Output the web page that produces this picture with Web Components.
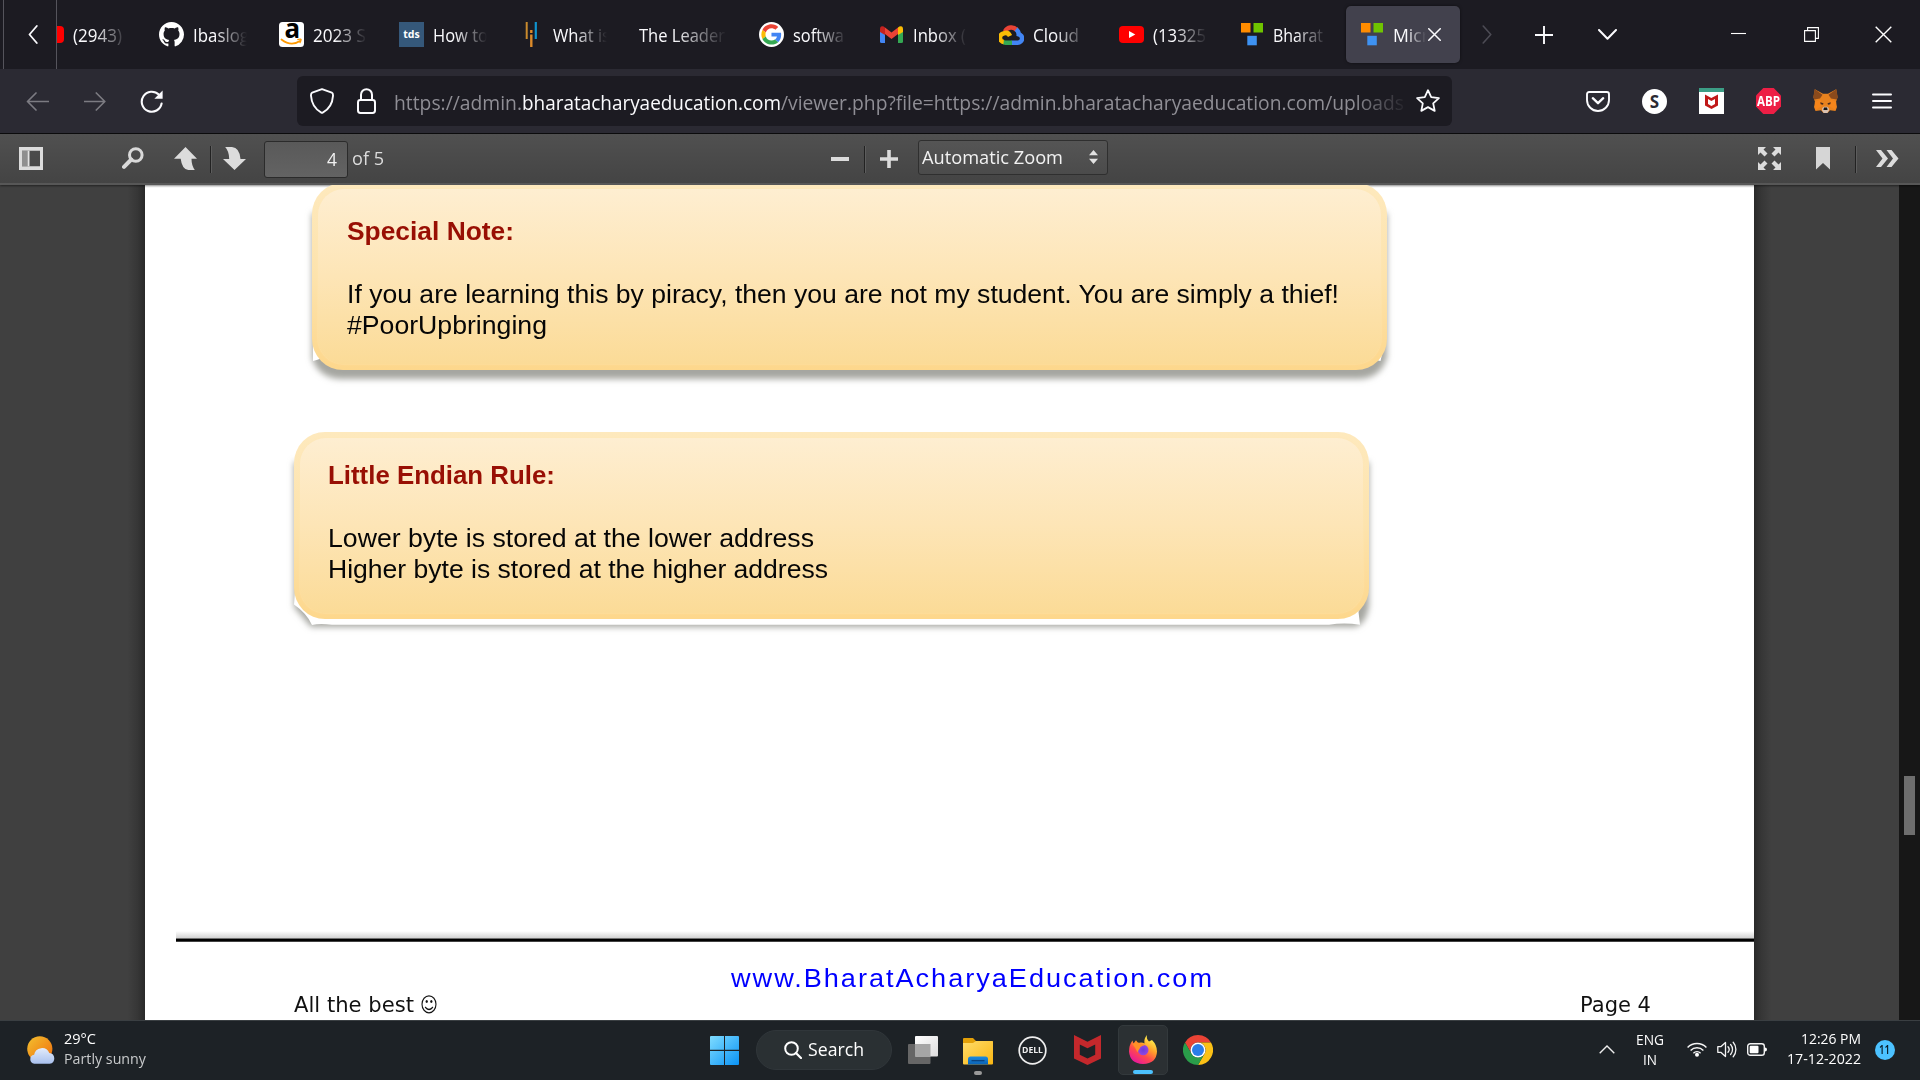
<!DOCTYPE html>
<html lang="en">
<head>
<meta charset="utf-8">
<title>Viewer</title>
<style>
html,body{margin:0;padding:0;background:#1c1b22}
body{width:1920px;height:1080px;overflow:hidden;font-family:"Open Sans","Noto Sans",sans-serif}
</style>
</head>
<body>
<desktop-screen></desktop-screen>
<script>
const ICONS = {
  chevL: ['0 0 10 19','<path d="M8.8 1 1.5 9.5l7.3 8.5" fill="none" stroke="#fbfbfe" stroke-width="1.8" stroke-linecap="round" stroke-linejoin="round"/>'],
  chevRdim: ['0 0 10 19','<path d="M1.2 1 8.8 9.5 1.2 18" fill="none" stroke="#4c4b54" stroke-width="1.6" stroke-linecap="round" stroke-linejoin="round"/>'],
  plus: ['0 0 18 18','<path d="M9 0v18M0 9h18" stroke="#fbfbfe" stroke-width="1.9" fill="none"/>'],
  chevD: ['0 0 19 11','<path d="M1 1l8.5 8.7L18 1" fill="none" stroke="#fbfbfe" stroke-width="2" stroke-linecap="round" stroke-linejoin="round"/>'],
  min: ['0 0 15 15','<path d="M0 6.5h15" stroke="#fff" stroke-width="1.1"/>'],
  restore: ['0 0 15 15','<path d="M.6 3.6h10.8v10.8H.6zM3.6 3.4V.6h10.8v10.8h-2.8" fill="none" stroke="#fff" stroke-width="1.1"/>'],
  close: ['0 0 17 17','<path d="M.7.7l15.6 15.6M16.3.7.7 16.3" stroke="#fff" stroke-width="1.4"/>'],
  closeTab: ['0 0 12 12','<path d="M.7.7l10.6 10.6M11.3.7.7 11.3" stroke="#fbfbfe" stroke-width="1.4" stroke-linecap="round"/>'],
  back: ['0 0 23 19','<path d="M22.5 9.5H1.5M10 1 1.5 9.5 10 18" fill="none" stroke="#7c7b82" stroke-width="1.7" stroke-linecap="round" stroke-linejoin="round"/>'],
  fwd: ['0 0 22 19','<path d="M.5 9.5h20M12.3 1l8.5 8.5-8.5 8.5" fill="none" stroke="#7c7b82" stroke-width="1.7" stroke-linecap="round" stroke-linejoin="round"/>'],
  reload: ['0 0 23 23','<path d="M18.8 4.6A10 10 0 1 0 21.6 13.5" fill="none" stroke="#fbfbfe" stroke-width="2.1" stroke-linecap="round"/><path d="M22.6.6v8.2h-8.2z" fill="#fbfbfe"/>'],
  shield: ['0 0 24 26','<path d="M12 1.2 21.8 4.7Q23.2 5.3 23 7.8 22.2 19.5 12.7 24.6 12 25 11.3 24.6 1.8 19.5 1 7.8.8 5.3 2.2 4.7z" fill="none" stroke="#fbfbfe" stroke-width="1.9" stroke-linejoin="round"/>'],
  lock: ['0 0 19 26','<rect x="1" y="12" width="17" height="13" rx="2.4" fill="none" stroke="#fbfbfe" stroke-width="2"/><path d="M4 12V6.7a5.5 5.5 0 0 1 11 0V12" fill="none" stroke="#fbfbfe" stroke-width="2"/>'],
  star: ['0 0 24 24','<path d="M12 1.2l3.2 7 7.7.9-5.7 5.2 1.5 7.6-6.7-3.8-6.7 3.8 1.5-7.6L1.1 9.1l7.7-.9z" fill="none" stroke="#fbfbfe" stroke-width="1.8" stroke-linejoin="round"/>'],
  pocket: ['0 0 24 21','<path d="M3.2 1h17.6Q23 1 23 3.2V9a11 11 0 0 1-22 0V3.2Q1 1 3.2 1z" fill="none" stroke="#fbfbfe" stroke-width="1.9"/><path d="M6.8 7.2 12 12.2l5.2-5" fill="none" stroke="#fbfbfe" stroke-width="2.3" stroke-linecap="round" stroke-linejoin="round"/>'],
  mcafeeExt: ['0 0 25 26','<path fill="#fff" d="M0 0h25v26H0z"/><path fill="#3c9e86" d="M0 0h25v4H0z"/><path d="M6 6.5l6.3 3.6L19 6.5v11L12.5 21 6 17.5zM9 11v5l3.4 2 3.6-2v-5l-3.6 2z" fill="#c01818" fill-rule="evenodd"/>'],
  octagon: ['0 0 25 26','<path d="M7.3 0h10.4L25 7.6v10.8L17.7 26H7.3L0 18.4V7.6z" fill="#ed1e45"/>'],
  fox: ['0 0 25 24','<path d="M1.8.2 10 4.800h5L23.200.2l1.300 8.300-1.500 4.500 1 5-1.500 4-5.500-.8L14.500 24h-4L8 21.200l-5.500.8-1.500-4 1-5L.5 8.500z" fill="#e8821e"/><path d="M1.800.2 9.500 5.800 7 9.500 1.200 10.500.3 7.500z" fill="#8a4a1c"/><path d="M23.200.2 15.500 5.800 18 9.500l5.800 1 .9-3z" fill="#8a4a1c"/><path d="M1.800 13l5.700-2.500L9 17l-6.500 4z" fill="#f6851b"/><path d="M23.200 13l-5.700-2.500L16 17l6.500 4z" fill="#f6851b"/><path d="M7.200 13.200l3.300 1-.5 1.600-2.300-.6zM17.800 13.200l-3.300 1 .5 1.600 2.300-.6z" fill="#4a2d1e"/><path d="M9.300 19l1.700-1.200h3l1.700 1.200.2 2.600L14.300 24h-3.600l-1.600-2.400z" fill="#d7c1b3"/><path d="M11 18.600h3l.6 2.400h-4.200z" fill="#161616"/>'],
  menu: ['0 0 20 16','<path d="M1 1.500h18M1 8h18M1 14.500h18" stroke="#fbfbfe" stroke-width="2" stroke-linecap="round"/>'],
  yt: ['0 0 25 17','<rect width="25" height="17" rx="4" fill="#f00"/><path d="M10 5v7l6.300-3.500z" fill="#fff"/>'],
  github: ['0 0 16 16','<path fill="#fff" d="M8 0C3.580 0 0 3.580 0 8c0 3.540 2.290 6.530 5.470 7.590.4.070.550-.170.550-.380 0-.190-.010-.820-.010-1.490-2.010.370-2.530-.490-2.690-.940-.090-.230-.480-.940-.820-1.130-.280-.150-.680-.520-.010-.530.630-.010 1.080.580 1.230.820.720 1.210 1.870.870 2.330.660.070-.520.280-.870.510-1.070-1.780-.200-3.640-.890-3.640-3.950 0-.870.310-1.590.820-2.150-.080-.200-.360-1.020.080-2.120 0 0 .670-.210 2.200.820.640-.180 1.320-.270 2-.270s1.360.090 2 .270c1.530-1.040 2.200-.820 2.200-.820.440 1.100.160 1.920.080 2.120.510.560.820 1.270.820 2.150 0 3.070-1.870 3.750-3.650 3.950.290.250.540.730.540 1.480 0 1.070-.010 1.930-.010 2.200 0 .210.150.460.550.380A8.010 8.010 0 0 0 16 8c0-4.420-3.580-8-8-8z"/>'],
  amazon: ['0 0 25 25','<rect width="25" height="25" rx="3.500" fill="#fff"/><path d="M2.500 17.500q9.500 7.500 18.500 1.500" fill="none" stroke="#f90" stroke-width="1.800" stroke-linecap="round"/><path d="M18.300 17.600q4.300-1 3.700.4-.2 1.800-1.300 3" fill="none" stroke="#f90" stroke-width="1.300"/>'],
  medium: ['0 0 25 25','<path d="M7.700 0v17" stroke="#c98a2d" stroke-width="2"/><path d="M16.800 0v17" stroke="#0f94cf" stroke-width="2.200"/><path d="M12.300 8v3M12.300 12.500V25" stroke="#dc8b2a" stroke-width="2.400"/>'],
  google: ['0 0 48 48','<circle cx="24" cy="24" r="24" fill="#fff"/><g transform="translate(4.500 4.500) scale(.81)"><path fill="#EA4335" d="M24 9.500c3.540 0 6.710 1.220 9.210 3.600l6.850-6.850C35.900 2.380 30.470 0 24 0 14.620 0 6.510 5.380 2.560 13.220l7.980 6.190C12.430 13.720 17.740 9.500 24 9.500z"/><path fill="#4285F4" d="M46.980 24.550c0-1.570-.15-3.090-.38-4.550H24v9.020h12.940c-.58 2.960-2.260 5.480-4.780 7.180l7.730 6c4.510-4.180 7.090-10.360 7.090-17.650z"/><path fill="#FBBC05" d="M10.530 28.590c-.48-1.450-.76-2.990-.76-4.590s.27-3.140.76-4.590l-7.980-6.190C.92 16.460 0 20.120 0 24s.92 7.540 2.560 10.780l7.970-6.190z"/><path fill="#34A853" d="M24 48c6.480 0 11.930-2.130 15.890-5.810l-7.730-6c-2.150 1.450-4.920 2.300-8.160 2.300-6.260 0-11.570-4.220-13.470-9.910l-7.980 6.190C6.510 42.620 14.620 48 24 48z"/></g>'],
  gmail: ['0 0 25 25','<path fill="#4285f4" d="M1 9v10.500Q1 21 2.500 21H6V11z"/><path fill="#34a853" d="M24 9v10.500q0 1.500-1.500 1.500H19V11z"/><path fill="#ea4335" d="M6 5.500l6.500 5 6.500-5V12l-6.500 5L6 12z"/><path fill="#fbbc04" d="M19 5.500q2-2 4-1Q24 5 24 7v3l-5 3z"/><path fill="#c5221f" d="M6 5.500q-2-2-4-1Q1 5 1 7v3l5 3z"/>'],
  cloud: ['0 0 25 21','<g fill="none" stroke-width="4.500"><path d="M6 7.500A7 7 0 0 1 17.800 6" stroke="#ea4335"/><path d="M17 5.200q2.700 2 2.700 5a4.300 4.300 0 0 1-1 8.500H12.500" stroke="#4285f4"/><path d="M13 18.700H6.500q-1.500 0-2.600-1" stroke="#34a853"/><path d="M4.700 18A4.300 4.300 0 0 1 4.500 9.500Q9 7.600 11 12" stroke="#fbbc05"/></g>'],
  bharat: ['0 0 25 25','<path fill="#ff8c00" d="M2 1h9.500v9.500H2z"/><path fill="#6fc400" d="M14.500 1H24v9.500h-9.500z"/><path fill="#3e92f2" d="M8.300 13.800h9.500v9.500H8.300z"/>'],
  sidebar: ['0 0 24 24','<path d="M0 0h24v24H0zM3 4v16h18V4z" fill="#dcdcdc" fill-rule="evenodd"/><path d="M3 4h5.500v16H3z" fill="#8f8f8f"/><path d="M8.500 4H10.500v16H8.500z" fill="#e3e3e3"/>'],
  find: ['0 0 22 22','<circle cx="13.800" cy="8" r="6.300" fill="none" stroke="#d9d9d9" stroke-width="3"/><path d="M9.300 12.500 2 19.800" stroke="#d9d9d9" stroke-width="4" stroke-linecap="round"/>'],
  up: ['0 0 23 23','<path d="M11.500 0 23 11.800h-5.500q0 6.700 3.300 11.200h-6.500Q8 22.500 6.700 11.800H0z" fill="#dcdcdc"/>'],
  down: ['0 0 23 23','<path d="M11.500 23 23 12h-5.500Q16.500.5 9 0H2.200q4 4.500 4 12H0z" fill="#dcdcdc"/>'],
  minusP: ['0 0 18 18','<path d="M0 7h18v4H0z" fill="#dcdcdc"/>'],
  plusP: ['0 0 18 18','<path d="M0 7.200h7.200V0h3.600v7.200H18v3.600h-7.200V18H7.200v-7.200H0z" fill="#dcdcdc"/>'],
  updown: ['0 0 9 14','<path d="M4.500 0 9 5.200H0zM4.500 14 0 8.800h9z" fill="#e2e2e2"/>'],
  full: ['0 0 23 23','<g fill="#dcdcdc"><path id="a" d="M0 0h8L5.500 2.500l4 4-3 3-4-4L0 8z"/><use href="#a" transform="matrix(-1 0 0 1 23 0)"/><use href="#a" transform="matrix(1 0 0 -1 0 23)"/><use href="#a" transform="matrix(-1 0 0 -1 23 23)"/></g>'],
  bookmark: ['0 0 16 23','<path d="M1 0h14v22.500L8 16 1 22.500z" fill="#d6d6d6"/>'],
  dbl: ['0 0 23 17','<path d="M0 0h5l7 8.500L5 17H0l6.500-8.500zM10.500 0h5l7 8.500-7 8.500h-5L17 8.500z" fill="#dcdcdc"/>'],
  weather: ['0 0 28 28','<defs><linearGradient id="s" x1="0" y1="0" x2="1" y2="1"><stop offset="0" stop-color="#f3c12f"/><stop offset="1" stop-color="#ef6c0c"/></linearGradient><linearGradient id="c" x1="0" y1="0" x2="0" y2="1"><stop offset="0" stop-color="#e2ebfa"/><stop offset="1" stop-color="#a9c1ee"/></linearGradient></defs><circle cx="12.800" cy="12.800" r="12.600" fill="url(#s)"/><path d="M7.300 27.800a4.600 4.600 0 0 1-.2-9.100 8 8 0 0 1 15.200-1.800 5.500 5.500 0 0 1 .4 10.900z" fill="url(#c)"/>'],
  win: ['0 0 29 29','<defs><linearGradient id="w" x1="0" y1="0" x2="1" y2="1" gradientUnits="objectBoundingBox"><stop offset="0" stop-color="#7fdcff"/><stop offset="1" stop-color="#0a93f5"/></linearGradient></defs><path d="M1 0h13v13.800H0V1q0-1 1-1zM15 0h13q1 0 1 1v12.800H15zM0 15h14v14H1q-1 0-1-1zM15 15h14v13q0 1-1 1H15z" fill="url(#w)"/>'],
  search: ['0 0 18 18','<circle cx="7.500" cy="7.500" r="6.300" fill="none" stroke="#fff" stroke-width="2"/><path d="M12 12l5 5" stroke="#fff" stroke-width="2.200" stroke-linecap="round"/>'],
  taskview: ['0 0 30 28','<defs><linearGradient id="t" x1="0" y1="0" x2="1" y2="1"><stop offset="0" stop-color="#fff"/><stop offset="1" stop-color="#dcdcdc"/></linearGradient></defs><rect y="8" width="22.500" height="20" rx="1" fill="#666"/><rect x="7" width="23" height="20.500" rx="1" fill="url(#t)"/><path d="M7 8h15.500v12.500H7z" fill="#a6a6a6"/>'],
  folder: ['0 0 30 28','<defs><linearGradient id="f" x1="0" y1="0" x2="1" y2="1"><stop offset="0" stop-color="#ffdc6a"/><stop offset="1" stop-color="#f9b612"/></linearGradient><linearGradient id="b" x1="0" y1="0" x2="0" y2="1"><stop offset="0" stop-color="#1a8be0"/><stop offset="1" stop-color="#0b62b5"/></linearGradient></defs><path d="M0 2q0-1 1-1h9l3 3h16q1 0 1 1v8H0z" fill="#e3a008"/><path d="M0 6h10l3-2h16q1 0 1 1v21.500q0 1-1 1H1q-1 0-1-1z" fill="url(#f)"/><path d="M5 27.500V22q0-2.500 2.500-2.500h15Q25 19.500 25 22v5.500z" fill="url(#b)"/><path d="M8.500 23.700h13" stroke="#0a3f7a" stroke-width="1.200"/>'],
  ring: ['0 0 29 29','<circle cx="14.500" cy="14.500" r="13.300" fill="none" stroke="#eee" stroke-width="1.700"/>'],
  mcafee: ['0 0 27 30','<path d="M0 0l13.500 6.700L27 0v23.500L13.500 30 0 23.500zM5.800 9.500v10.300l7.700 3.700 7.700-3.700V9.500l-7.700 3.800z" fill="#c4282c" fill-rule="evenodd"/>'],
  firefox: ['0 0 28 29','<defs><linearGradient id="o" x1=".8" y1=".1" x2=".25" y2=".95"><stop offset="0" stop-color="#fff44f"/><stop offset=".35" stop-color="#ffa22a"/><stop offset=".65" stop-color="#ff4a4a"/><stop offset="1" stop-color="#e91a9a"/></linearGradient><radialGradient id="p"><stop offset="0" stop-color="#6b3bdc"/><stop offset="1" stop-color="#9347e0"/></radialGradient></defs><path d="M18 0q-1 3.500 2 6.500l3-1.500q5 5 5 11.500Q27.500 28.500 14 29 1 28.500 0 16.500 0 10 3.500 5.500l1 3L7 5.300 9 8q4-1 6.500.5Q14.500 4 18 0z" fill="url(#o)"/><circle cx="14.200" cy="15" r="5.300" fill="url(#p)"/><path d="M3.500 9q5-2.500 7.500-.7 3.500.2 4.500 2.200-4 .5-4.500 2.500-2 2.500-2.500 4.500Q6 12 3.500 9z" fill="#ff9026"/>'],
  chrome: ['0 0 48 48','<path fill="#ea4335" d="M24 0a24 24 0 0 1 20.800 12H24a12 12 0 0 0-10.400 18L3.200 12A24 24 0 0 1 24 0z"/><path fill="#fbc116" d="M44.800 12A24 24 0 0 1 24 48l10.400-18A12 12 0 0 0 24 12z"/><path fill="#2a9d4a" d="M3.200 12l10.400 18a12 12 0 0 0 20.800 0L24 48A24 24 0 0 1 3.200 12z"/><circle cx="24" cy="24" r="12" fill="#fff"/><circle cx="24" cy="24" r="9.600" fill="#2a7de9"/>'],
  chevU: ['0 0 16 9','<path d="M.7 8.300 8 1l7.300 7.300" fill="none" stroke="#eee" stroke-width="1.400"/>'],
  wifi: ['0 0 20 15','<g fill="none" stroke="#f4f4f4" stroke-width="1.500"><path d="M.6 5.500a13.300 13.300 0 0 1 18.800 0M3.600 8.500a9 9 0 0 1 12.800 0M6.400 11.200a5.200 5.200 0 0 1 7.200 0"/></g><circle cx="10" cy="12.800" r="2" fill="#fff"/>'],
  vol: ['0 0 20 17','<g fill="none" stroke="#f4f4f4" stroke-width="1.300" stroke-linejoin="round" stroke-linecap="round"><path d="M.8 5.700h3L8.500 1.500v14L3.800 11.300h-3z"/><path d="M11 5.800a4 4 0 0 1 0 5.400M13.600 3.500a7.500 7.500 0 0 1 0 10M16.200 1.300a11 11 0 0 1 0 14.400"/></g>'],
  batt: ['0 0 20 13','<rect x=".7" y=".7" width="16.600" height="11.600" rx="2.600" fill="none" stroke="#f4f4f4" stroke-width="1.400"/><rect x="2.700" y="2.700" width="8.800" height="7.600" rx="1" fill="#fff"/><path d="M18 4.500q2 0 2 2t-2 2z" fill="#fff"/>'],
};

class UiIcon extends HTMLElement {
  connectedCallback() {
    const [vb, body] = ICONS[this.getAttribute('name')];
    const w = this.getAttribute('w'), h = this.getAttribute('h');
    this.attachShadow({mode:'open'}).innerHTML =
      `<style>:host{display:block;flex:none;width:${w}px;height:${h}px}svg{display:block;width:100%;height:100%}</style>
       <svg viewBox="${vb}" preserveAspectRatio="none">${body}</svg>`;
  }
}

/* One line of text, condensed or widened horizontally to a set measure. */
class TextRun extends HTMLElement {
  connectedCallback() {
    const g = n => this.getAttribute(n);
    this.attachShadow({mode:'open'}).innerHTML =
      `<style>:host{display:block;flex:none;width:${g('w')}px;font-size:${g('s')}px;line-height:${g('lh') || 24}px;white-space:pre}
       span{display:inline-block;transform-origin:0 50%}</style><span><slot></slot></span>`;
    this.fit();
    requestAnimationFrame(() => this.fit());
  }
  fit() {
    const s = this.shadowRoot.querySelector('span');
    s.style.transform = 'none';
    const n = s.getBoundingClientRect().width;
    if (n) s.style.transform = `scaleX(${+this.getAttribute('w') / n})`;
  }
}

class BrowserTab extends HTMLElement {
  connectedCallback() {
    const active = this.hasAttribute('active'), iconless = this.hasAttribute('iconless');
    this.attachShadow({mode:'open'}).innerHTML = `<style>
      :host{display:flex;flex:none;width:120px;height:69px;box-sizing:border-box;padding:6px 3px}
      .box{display:flex;align-items:center;width:114px;box-sizing:border-box;padding-left:13px;gap:9px;border-radius:5px;${active ? 'background:#42414d;box-shadow:0 0 3px #0008' : ''}}
      .pic{display:flex;width:25px;height:25px;flex:none;align-items:center;justify-content:center}
      .label{width:${iconless ? 88 : active ? 33 : 54}px;overflow:hidden;flex:none;color:#fbfbfe;
        -webkit-mask-image:linear-gradient(90deg,#000 40%,transparent 100%);mask-image:linear-gradient(90deg,#000 40%,transparent 100%)}
      ui-icon{margin-left:-7px}
    </style><div class="box">${iconless ? '' : '<div class="pic"><slot name="icon"></slot></div>'}
      <div class="label"><slot></slot></div>${active ? '<ui-icon name="closeTab" w="13" h="13"></ui-icon>' : ''}</div>`;
  }
}

class TabStrip extends HTMLElement {
  connectedCallback() {
    const t = (icon, label, w, extra='') => `<browser-tab ${extra}>${icon ? `<span slot="icon">${icon}</span>` : ''}<text-run w="${w}" s="18">${label}</text-run></browser-tab>`;
    const i = (n, w=25, h=25) => `<ui-icon name="${n}" w="${w}" h="${h}"></ui-icon>`;
    this.attachShadow({mode:'open'}).innerHTML = `<style>
      :host{display:flex;align-items:center;height:69px;background:#1c1b22;flex:none}
      .scroll{display:flex;align-items:center;justify-content:center;box-sizing:border-box;width:54px;height:69px;margin-left:3px;padding-left:5px;border-left:1px solid #55545c;border-right:1px solid #55545c;flex:none}
      .tabs{display:flex;width:1406px;overflow:hidden;flex:none}
      .tabs browser-tab:first-child{margin-left:-34px}
      .a{position:relative;width:25px;height:25px;display:block}
      .a b{position:absolute;left:5.500px;top:-9px;font:bold 26px/30px "Noto Sans";color:#000}
      .tds{display:block;width:25px;height:25px;background:#35587a;color:#fff;font:bold 10.500px/24px "Noto Sans";text-align:center}
    </style>
    <div class="scroll">${i('chevL',10,19)}</div>
    <div class="tabs">
      ${t(i('yt',25,17),'(2943)',49)}
      ${t(i('github'),'Ibaslog',56)}
      ${t(`<span class="a">${i('amazon')}<b>a</b></span>`,'2023 S',53)}
      ${t('<span class="tds">tds</span>','How to',55)}
      ${t(i('medium',25,25),'What is',57)}
      ${t('','The Leader',86,'iconless')}
      ${t(i('google'),'softwa',51)}
      ${t(i('gmail',25,25),'Inbox (',53)}
      ${t(i('cloud',25,21),'Cloud',46)}
      ${t(i('yt',25,17),'(13325',53)}
      ${t(i('bharat'),'Bharat',50)}
      ${t(i('bharat'),'Micr',36,'active')}
    </div>
    <ui-icon name="chevRdim" w="10" h="19" style="margin-left:19px"></ui-icon>
    <ui-icon name="plus" w="18" h="18" style="margin:1px 0 0 43px"></ui-icon>
    <ui-icon name="chevD" w="19" h="11" style="margin-left:45px"></ui-icon>
    <ui-icon name="min" w="15" h="15" style="margin-left:114px"></ui-icon>
    <ui-icon name="restore" w="15" h="15" style="margin-left:58px"></ui-icon>
    <ui-icon name="close" w="17" h="17" style="margin-left:56px"></ui-icon>`;
  }
}

class NavBar extends HTMLElement {
  connectedCallback() {
    const i = (n, w, h, ml) => `<ui-icon name="${n}" w="${w}" h="${h}" style="margin-left:${ml}px"></ui-icon>`;
    this.attachShadow({mode:'open'}).innerHTML = `<style>
      :host{display:flex;align-items:center;height:64px;background:#2b2a33;border-bottom:1px solid #0c0c0d;flex:none}
      .url{display:flex;align-items:center;width:1155px;height:50px;margin-left:134px;background:#1c1b22;border-radius:6px;flex:none;color:#8f8e95}
      .txt{display:flex;margin:3px 0 0 18px;-webkit-mask-image:linear-gradient(90deg,#000 95%,transparent 100.500%);mask-image:linear-gradient(90deg,#000 95%,transparent 100.500%)}
      .host{color:#fbfbfe}
      .badge{display:grid;place-items:center;width:25px;height:25px;margin-left:32px;border-radius:50%;background:#fff;color:#2b2a33;font:bold 17px/25px "Noto Sans"}
      .abp{display:grid;margin-left:32px}
      .abp>*{grid-area:1/1}
      .abp text-run{color:#fff;font-weight:700;place-self:center}
    </style>
    ${i('back',23,19,26)}${i('fwd',22,19,35)}${i('reload',23,23,34)}
    <div class="url">${i('shield',24,26,13)}${i('lock',19,26,23)}
      <div class="txt"><text-run w="128" s="19.500">https://admin.</text-run><text-run class="host" w="259" s="19.500">bharatacharyaeducation.com</text-run><text-run w="623" s="19.500">/viewer.php?file=https://admin.bharatacharyaeducation.com/uploads</text-run></div>
      ${i('star',24,24,12)}</div>
    ${i('pocket',24,21,134)}
    <div class="badge">S</div>
    ${i('mcafeeExt',25,26,32)}
    <div class="abp"><ui-icon name="octagon" w="25" h="26"></ui-icon><text-run w="23" s="14" lh="26">ABP</text-run></div>
    ${i('fox',25,24,32)}${i('menu',20,16,34)}`;
  }
}

class PdfToolbar extends HTMLElement {
  connectedCallback() {
    const i = (n, w, h, ml, mt=-2) => `<ui-icon name="${n}" w="${w}" h="${h}" style="margin-left:${ml}px;margin-top:${mt}px"></ui-icon>`;
    const sep = ml => `<i style="margin-left:${ml}px"></i>`;
    this.attachShadow({mode:'open'}).innerHTML = `<style>
      :host{display:flex;align-items:center;height:51px;background:linear-gradient(#505050,#444 96%,#575757 97%);flex:none;color:#dcdcdc;box-shadow:0 1px 2px #0007;z-index:1}
      i{width:1px;height:27px;background:#222;border-right:1px solid #5d5d5d;flex:none;margin-top:-1px}
      .page{display:flex;justify-content:flex-end;align-items:center;box-sizing:border-box;width:84px;height:37px;margin:-1px 0 0 18px;padding:0 10px 1px 0;border:1px solid #2b2b2b;border-radius:3px;background:linear-gradient(#595959,#636363);color:#f2f2f2}
      .zoom{display:flex;align-items:center;box-sizing:border-box;width:190px;height:35px;margin:-5px 0 0 20px;padding:0 9px 0 3px;border:1px solid #2f2f2f;border-radius:3px;background:linear-gradient(#555,#4b4b4b);color:#f2f2f2;justify-content:space-between}
    </style>
    ${i('sidebar',24,23,19)}${i('find',22,22,79,-4)}${i('up',23,23,30)}${sep(13)}${i('down',23,23,11)}
    <div class="page"><text-run w="10" s="18">4</text-run></div>
    <text-run w="32" s="18" style="margin:-4px 1px 0 4px">of 5</text-run>
    ${i('minusP',18,18,446)}${sep(15)}${i('plusP',18,18,14)}
    <div class="zoom"><text-run w="141" s="18.500">Automatic Zoom</text-run><ui-icon name="updown" w="9" h="14" style="margin-top:-1px"></ui-icon></div>
    ${i('full',23,23,650)}${i('bookmark',16,23,34)}${sep(24)}${i('dbl',23,17,19)}`;
  }
}

/* Rounded callout; the drop shadow and the white notches at its lower corners are drawn behind it. */
class NoteBox extends HTMLElement {
  connectedCallback() {
    const gap = this.hasAttribute('gap');
    const art = gap
      ? `<path d="M0 30V175l17 20H1060q12-2 15-21V30z" fill="#a5a6a0" filter="url(#bl)"/>
         <path d="M1 160L0 172.500q13 9 18 20.500 8-2 20-.2H1035q15-2.500 31 0l-1.500-13 10-20z" fill="#fff"/>`
      : `<path d="M0 30V176q8 20 30 20H1045q24 0 30-22V30z" fill="#a5a6a0" filter="url(#bl)"/>
         <path d="M1 160v18q8-2 10-4l10-8zM1074 155l-5.500 23-20-4z" fill="#fff"/>`;
    this.attachShadow({mode:'open'}).innerHTML = `<style>
      :host{display:grid;width:1075px;height:187px;flex:none;font-family:"Liberation Sans",sans-serif;color:#060606}
      svg,.box{grid-area:1/1}
      svg{width:1075px;height:187px;overflow:visible}
      .box{box-sizing:border-box;border-radius:31px;background:linear-gradient(#fee9bd,#fde3ac 50%,#fdd78c);padding:6px;z-index:1;display:grid}
      .in{border-radius:26px;background:linear-gradient(#feeed1,#fde5b6 50%,#fbdb97);padding:${gap ? 22 : 27}px 0 0 ${gap ? 28 : 29}px;box-shadow:0 0 2px #fde6b8}
    </style>
    <svg viewBox="0 0 1075 187"><defs><filter id="bl" x="-5%" y="-20%" width="110%" height="150%"><feGaussianBlur stdDeviation="3"/></filter></defs>${art}</svg>
    <div class="box"><div class="in"><slot></slot></div></div>`;
  }
}

class PdfView extends HTMLElement {
  connectedCallback() {
    const f = 25.6, lh = 31.4;
    this.attachShadow({mode:'open'}).innerHTML = `<style>
      :host{display:flex;height:835px;flex:none;background:#3f3f3f;overflow:hidden}
      .l,.r{width:145px;flex:none}
      .l{background:linear-gradient(90deg,#404040 88%,#363636 95%,#292929)}
      .r{background:linear-gradient(270deg,#404040 88%,#363636 95%,#292929)}
      .page{width:1609px;flex:none;background:#fff;display:flex;flex-direction:column;overflow:hidden}
      .bar{width:21px;background:#171717;flex:none;display:flex;justify-content:center}
      .bar b{width:11px;height:59px;margin-top:591px;background:#6e6e6e}
      .h{font-weight:700;color:#980f04;margin-bottom:${lh}px}
      .rule{flex:none;margin:312px 0 0 31px;height:11px;background:linear-gradient(#fff,#d4d4d4 62%,#777 68%,#000 72%,#000 92%,#999)}
      .link{margin:21px 0 0 586px;color:#00f;font-family:"Liberation Sans";letter-spacing:1.900px}
      .foot{display:flex;align-items:center;margin:-3px 103px 0 149px;font-family:"DejaVu Sans";color:#111}
      .foot text-run:last-child{margin-left:auto}
    </style>
    <div class="l"></div>
    <div class="page">
      <note-box style="margin:-2px 0 0 167px">
        <text-run class="h" w="167" s="${f}" lh="${lh}">Special Note:</text-run>
        <text-run w="992" s="${f}" lh="${lh}">If you are learning this by piracy, then you are not my student. You are simply a thief!</text-run>
        <text-run w="200" s="${f}" lh="${lh}">#PoorUpbringing</text-run>
      </note-box>
      <note-box gap style="margin:62px 0 0 148.500px">
        <text-run class="h" w="227" s="${f}" lh="${lh}">Little Endian Rule:</text-run>
        <text-run w="486" s="${f}" lh="${lh}">Lower byte is stored at the lower address</text-run>
        <text-run w="500" s="${f}" lh="${lh}">Higher byte is stored at the higher address</text-run>
      </note-box>
      <div class="rule"></div>
      <text-run class="link" w="483" s="26" lh="30">www.BharatAcharyaEducation.com</text-run>
      <div class="foot"><text-run w="120" s="21.500" lh="30">All the best</text-run><text-run w="18" s="21" lh="30" style="margin-left:6px">☺</text-run><text-run w="71" s="21.500" lh="30">Page 4</text-run></div>
    </div>
    <div class="r"></div>
    <div class="bar"><b></b></div>`;
  }
}

class TaskBar extends HTMLElement {
  connectedCallback() {
    const i = (n, w, h, ml, mt=-2) => `<ui-icon name="${n}" w="${w}" h="${h}" style="margin-left:${ml}px;margin-top:${mt}px"></ui-icon>`;
    this.attachShadow({mode:'open'}).innerHTML = `<style>
      :host{display:flex;align-items:center;height:60px;box-sizing:border-box;border-top:1px solid #3a3f42;background:#1d2226;flex:none;color:#fff}
      .col{display:flex;flex-direction:column;flex:none;margin-top:-5px}
      .end{align-items:flex-end}.mid{align-items:center;margin-top:-3px}
      .dim{color:#c9cbcc}
      .pill{display:flex;align-items:center;box-sizing:border-box;width:136px;height:40px;margin:-1px 0 0 17px;padding-left:27px;border-radius:20px;background:#2a3033;border:1px solid #30363a;flex:none}
      .app{display:flex;flex-direction:column;align-items:center;justify-content:flex-end;box-sizing:border-box;height:50px;flex:none;margin-top:-1px}
      .app u{height:4px;border-radius:2px;margin-top:6px}
      .ff{width:50px;background:#2b3033;border:1px solid #33393c;border-radius:5px;margin-left:17px}
      .dell{display:grid;margin:-1px 0 0 25.500px;flex:none}.dell>*{grid-area:1/1}
      .dell text-run{place-self:center;font-weight:700;color:#eee}
      .badge{width:20px;height:20px;border-radius:50%;background:#4cc2ff;color:#06141d;font-weight:600;margin:-1px 0 0 14px;display:grid;place-items:center;flex:none}
    </style>
    ${i('weather',28,28,27,-1)}
    <div class="col" style="margin-left:9px"><text-run w="32" s="15" lh="20">29°C</text-run><text-run class="dim" w="82" s="15" lh="20">Partly sunny</text-run></div>
    ${i('win',29,29,563.5,-1)}
    <div class="pill"><ui-icon name="search" w="18" h="18"></ui-icon><text-run w="56" s="18" style="margin:-2px 0 0 6px">Search</text-run></div>
    ${i('taskview',30,28,16,-1)}
    <div class="app" style="margin-left:25px"><ui-icon name="folder" w="30" h="28"></ui-icon><u style="width:8px;background:#999"></u></div>
    <div class="dell"><ui-icon name="ring" w="29" h="29"></ui-icon><text-run w="21" s="9.500" lh="12">DELL</text-run></div>
    ${i('mcafee',27,30,26.5,-1)}
    <div class="app ff"><ui-icon name="firefox" w="28" h="29"></ui-icon><u style="width:20px;background:#4cc2ff"></u></div>
    ${i('chrome',30,30,15,-1)}
    ${i('chevU',16,9,386)}
    <div class="col mid" style="margin-left:21px"><text-run w="28" s="15" lh="20">ENG</text-run><text-run w="14" s="15" lh="20">IN</text-run></div>
    ${i('wifi',20,15,23)}${i('vol',20,17,10)}${i('batt',20,13,10)}
    <div class="col end" style="margin-left:20px"><text-run w="60" s="15" lh="20">12:26 PM</text-run><text-run w="74" s="15" lh="20">17-12-2022</text-run></div>
    <div class="badge"><text-run w="11" s="12.500" lh="20">11</text-run></div>`;
  }
}

class DesktopScreen extends HTMLElement {
  connectedCallback() {
    this.attachShadow({mode:'open'}).innerHTML = `<style>:host{display:flex;flex-direction:column;width:1920px;height:1080px;overflow:hidden}</style>
    <tab-strip></tab-strip><nav-bar></nav-bar><pdf-toolbar></pdf-toolbar><pdf-view></pdf-view><task-bar></task-bar>`;
  }
}

customElements.define('ui-icon', UiIcon);
customElements.define('text-run', TextRun);
customElements.define('browser-tab', BrowserTab);
customElements.define('tab-strip', TabStrip);
customElements.define('nav-bar', NavBar);
customElements.define('pdf-toolbar', PdfToolbar);
customElements.define('note-box', NoteBox);
customElements.define('pdf-view', PdfView);
customElements.define('task-bar', TaskBar);
customElements.define('desktop-screen', DesktopScreen);
</script>
</body>
</html>
